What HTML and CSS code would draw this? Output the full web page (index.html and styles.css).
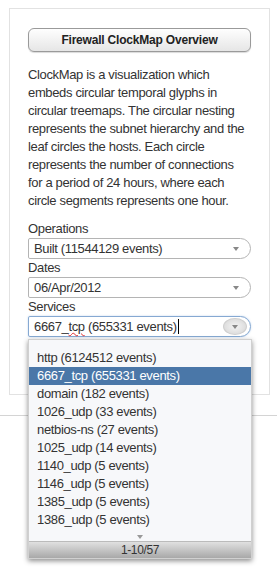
FILE: index.html
```html
<!DOCTYPE html>
<html lang="en">
<head>
    <meta charset="UTF-8" />
    <meta name="viewport" content="width=device-width, initial-scale=1.0" />
    <title>Firewall ClockMap Overview</title>
    <link rel="stylesheet" href="styles.css">
</head>
<body>
    <div class="page">
        <div class="panel">
            <button type="button" class="title-btn">Firewall ClockMap Overview</button>
            <p class="intro">ClockMap is a visualization which embeds circular temporal glyphs in circular treemaps. The circular nesting represents the subnet hierarchy and the leaf circles the hosts. Each circle represents the number of connections for a period of 24 hours, where each circle segments represents one hour.</p>

            <div class="field">
                <label>Operations</label>
                <div class="select">
                    <span class="select-text">Built (11544129 events)</span>
                    <span class="arrow"></span>
                </div>
            </div>
            <div class="field">
                <label>Dates</label>
                <div class="select">
                    <span class="select-text">06/Apr/2012</span>
                    <span class="arrow"></span>
                </div>
            </div>
            <div class="field">
                <label>Services</label>
                <div class="select-wrap">
                    <div class="select focused">
                        <span class="select-text">6667_<span class="misspelt">tcp</span> (655331 events)<span class="caret"></span></span>
                        <span class="arrow-btn"><span class="arrow"></span></span>
                    </div>
                    <div class="dropdown">
                        <ul class="options">
                            <li>http (6124512 events)</li>
                            <li class="active">6667_tcp (655331 events)</li>
                            <li>domain (182 events)</li>
                            <li>1026_udp (33 events)</li>
                            <li>netbios-ns (27 events)</li>
                            <li>1025_udp (14 events)</li>
                            <li>1140_udp (5 events)</li>
                            <li>1146_udp (5 events)</li>
                            <li>1385_udp (5 events)</li>
                            <li>1386_udp (5 events)</li>
                        </ul>
                        <div class="more"><span class="arrow"></span></div>
                        <div class="pager">1-10/57</div>
                    </div>
                </div>
            </div>
        </div>
        <div class="rule"></div>
    </div>
</body>
</html>
```

FILE: styles.css
```css
/* Global Styles */
html, body {
    margin: 0;
    background: #fff;
}

body {
    font-family: 'Liberation Sans', Arial, sans-serif;
    color: #333;
    letter-spacing: -0.35px;
}

.page {
    min-height: 584px;
    overflow: visible;
}

.panel {
    margin: 8px 0 0 9px;
    width: 223px;
    padding: 19px 18px 57px 18px;
    border: 1px solid #e2e2e2;
}

.title-btn {
    display: block;
    width: 100%;
    height: 24px;
    padding: 0;
    font-family: inherit;
    font-size: 12px;
    font-weight: bold;
    letter-spacing: -0.2px;
    color: #222;
    background: linear-gradient(#fefefe, #e6e6e6);
    border: 1px solid #9a9a9a;
    border-radius: 6px;
    box-shadow: 0 1px 1px rgba(0, 0, 0, 0.15);
}

.intro {
    margin: 14px 0 10px 0;
    font-size: 13px;
    line-height: 18px;
}

/* Form fields */
.field label {
    display: block;
    font-size: 13px;
    line-height: 18px;
}

.select {
    position: relative;
    display: flex;
    align-items: center;
    height: 21px;
    box-sizing: border-box;
    padding-left: 5px;
    border: 1px solid #b4b4b4;
    border-radius: 2px 11px 11px 2px;
    background: #fff;
    font-size: 13px;
}

.select-text {
    flex: 1;
    white-space: nowrap;
}

.arrow {
    display: inline-block;
    width: 0;
    height: 0;
    border-left: 3px solid transparent;
    border-right: 3px solid transparent;
    border-top: 4px solid #888;
}

.select > .arrow {
    margin-right: 11px;
}

.select.focused {
    border-color: #86a9d2;
    box-shadow: 0 0 2px rgba(100, 150, 210, 0.4);
}

.misspelt {
    text-decoration: underline wavy #e03030;
    text-decoration-thickness: 1px;
}

.caret {
    display: inline-block;
    width: 1px;
    height: 15px;
    margin-left: 1px;
    vertical-align: -3px;
    background: #000;
}

.arrow-btn {
    display: flex;
    align-items: center;
    justify-content: center;
    width: 22px;
    height: 15px;
    margin-right: 3px;
    border-radius: 50%;
    background: radial-gradient(#f4f4f4, #d4d4d4);
    border: 1px solid #cfcfcf;
}

/* Dropdown list */
.select-wrap {
    position: relative;
}

.dropdown {
    position: absolute;
    top: 23px;
    left: 0;
    width: 224px;
    background: #f7f8fa;
    border: 1px solid #d0d0d0;
    box-sizing: border-box;
    box-shadow: 0 2px 5px rgba(0, 0, 0, 0.45);
    z-index: 2;
}

.options {
    list-style: none;
    margin: 0;
    padding: 9px 0 0 0;
}

.options li {
    height: 18px;
    line-height: 18px;
    padding-left: 8px;
    font-size: 13px;
    color: #333;
}

.options li.active {
    background: #4a77a8;
    color: #fff;
}

.more {
    height: 12px;
    text-align: center;
    line-height: 10px;
}

.more .arrow {
    border-top-color: #999;
}

.pager {
    height: 16px;
    line-height: 16px;
    text-align: center;
    font-size: 12px;
    color: #333;
    border-top: 1px solid #bbb;
    background: linear-gradient(#e0e0e0, #a8a8a8);
}

.rule {
    margin-top: 20px;
    border-top: 1px solid #d4d4d4;
}
```
